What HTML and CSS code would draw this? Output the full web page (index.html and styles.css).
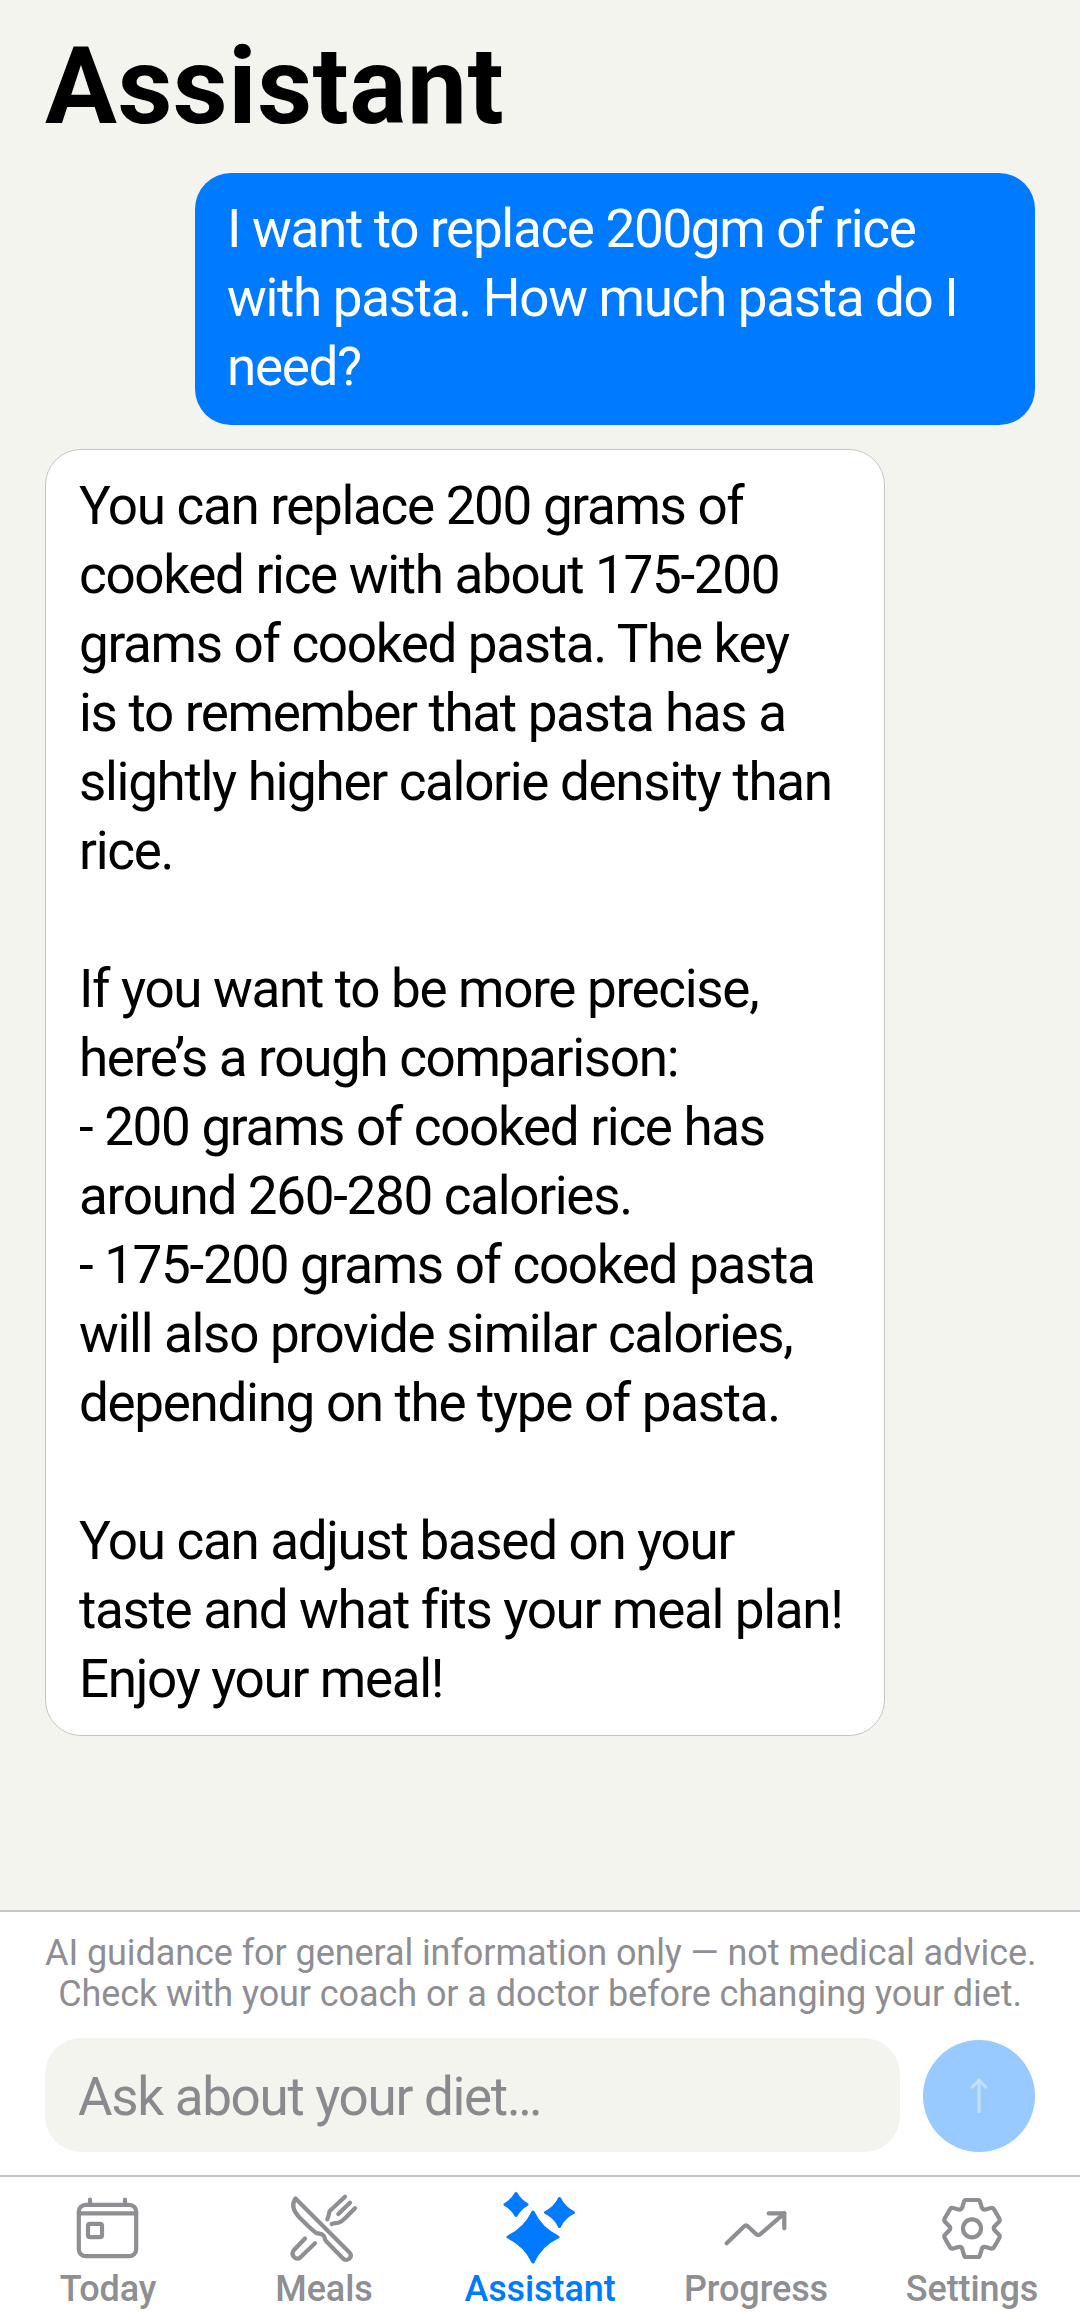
FILE: index.html
```html
<!DOCTYPE html>
<html lang="en">
<head>
    <meta charset="UTF-8">
    <meta name="viewport" content="width=device-width, initial-scale=1.0">
    <title>Assistant</title>
    <link rel="stylesheet" href="styles.css">
</head>
<body>
    <div class="app">
        <main class="chat">
            <h1>Assistant</h1>
            <div class="bubble user">I want to replace 200gm of rice with pasta. How much pasta do I need?</div>
            <div class="bubble reply">You can replace 200 grams of cooked rice with about 175-200 grams of cooked pasta. The key
is to remember that pasta has a slightly higher calorie density than rice.

If you want to be more precise, here’s a rough comparison:
- 200 grams of cooked rice has around 260-280 calories.
- 175-200 grams of cooked pasta will also provide similar calories, depending on the type of pasta.

You can adjust based on your taste and what fits your meal plan! Enjoy your meal!</div>
        </main>

        <section class="composer">
            <p class="disclaimer">AI guidance for general information only — not medical advice.<br>Check with your coach or a doctor before changing your diet.</p>
            <div class="ask-row">
                <div class="ask-input">Ask about your diet…</div>
                <button class="send" type="button" aria-label="Send">
                    <svg class="send-icon" viewBox="0 0 20 36" fill="none" stroke="currentColor" stroke-width="3">
                        <path d="M10 35V2M2.500 10 10 2l7.500 8"/>
                    </svg>
                </button>
            </div>
        </section>

        <!-- Tab bar -->
        <nav class="tabs">
            <div class="tab">
                <svg class="tab-icon" viewBox="0 0 72 72" fill="none" stroke="currentColor" stroke-width="4.2" stroke-linecap="round" stroke-linejoin="round">
                    <rect x="6.800" y="12.800" width="57.400" height="51.400" rx="7"/>
                    <path d="M6.800 21.300h57.400M18 7.700v5M53 7.700v5"/>
                    <rect x="16" y="31.800" width="14" height="13.400" rx="2"/>
                </svg>
                <span>Today</span>
            </div>
            <div class="tab">
                <svg class="tab-icon" viewBox="0 0 72 72" fill="none" stroke="currentColor" stroke-width="4.2" stroke-linecap="round" stroke-linejoin="round">
                    <path d="M7.500 6.500 61.500 60.500c2 2.500 1.500 4.500 0 6-1.800 1.500-4.500 2-6.500 0L38 49c-1.500-1.500-1-3.500-2.500-5.500s-4.500-1.500-7-2.500C25 39.500 18 32 11 25 5 18.500 3.500 12 7.500 6.500Z"/>
                    <path d="M57 4.700 42 18.700c-1.500 2.500-1 5.500-2.700 8.600M62 10.700 50.300 22M67 16.300 57 26.300c-2 2.500-4.500 3.700-6.700 4.400-2.500.6-4.500.5-6.600 1.300"/>
                    <path d="M17 46.500 6 58c-2 2.500-2 5 0 7s4.500 2 6.500.3L27 51.300"/>
                </svg>
                <span>Meals</span>
            </div>
            <div class="tab active">
                <svg class="tab-icon" viewBox="0 0 72 72" fill="currentColor" stroke="currentColor" stroke-width="3" stroke-linejoin="round">
                    <path d="M29 20Q37 37 54 45 37 53 29 70 21 53 4 45 21 37 29 20Z"/>
                    <path d="M12 1.500Q16 8.500 23 12.500 16 16.500 12 23.500 8 16.500 1 12.500 8 8.500 12 1.500Z"/>
                    <path d="M55.500 6.500Q60 16 69.500 20.500 60 25 55.500 34.500 51 25 41.500 20.500 51 16 55.500 6.500Z"/>
                </svg>
                <span>Assistant</span>
            </div>
            <div class="tab">
                <svg class="tab-icon" viewBox="0 0 72 72" fill="none" stroke="currentColor" stroke-width="4.2" stroke-linecap="round" stroke-linejoin="round">
                    <path d="M6.700 51.300 24 34.500c1.200-1.200 2.800-1.200 4 0l8 7.500c1.200 1.200 3.200 1.300 4.500 0L64.300 21.300"/>
                    <path d="M48.700 21.300h15.600v15"/>
                </svg>
                <span>Progress</span>
            </div>
            <div class="tab">
                <svg class="tab-icon" viewBox="0 0 72 72" fill="none" stroke="currentColor" stroke-width="4.2" stroke-linecap="round" stroke-linejoin="round">
                    <path d="M30 8H42Q43.600 8 44 9.500L45.600 15Q46.400 18 49.500 17.500L55 16Q57 15.500 58 17.300L63.300 26.500Q64.300 28.500 62.800 30L58.800 34Q56.800 36.300 58.800 38.600L62.800 42.600Q64.300 44 63.300 46L58 55.200Q57 57 55 56.500L49.500 55Q46.400 54.500 45.600 57.500L44 63Q43.600 65 42 65H30Q28.400 65 28 63L26.400 57.500Q25.600 54.500 22.500 55L17 56.500Q15 57 14 55.200L8.700 46Q7.700 44 9.200 42.600L13.200 38.600Q15.200 36.300 13.200 34L9.200 30Q7.700 28.500 8.700 26.500L14 17.300Q15 15.500 17 16L22.500 17.500Q25.600 18 26.400 15L28 9.500Q28.400 8 30 8Z"/>
                    <circle cx="36" cy="36.400" r="9"/>
                </svg>
                <span>Settings</span>
            </div>
        </nav>
    </div>
</body>
</html>
```

FILE: styles.css
```css
* {
    box-sizing: border-box;
}

body {
    margin: 0;
    font-family: Roboto, sans-serif;
    background: #f4f4ef;
    color: #000;
}

.app {
    display: flex;
    flex-direction: column;
    height: 100vh;
}

.chat {
    flex: 1;
    display: flex;
    flex-direction: column;
    padding: 27px 45px 0;
}

h1 {
    margin: 0 0 27px;
    font-size: 107px;
    letter-spacing: 0.5px;
    line-height: 119px;
    font-weight: 700;
}

.bubble {
    width: 840px;
    padding: 22px 33px 23px 32px;
    border-radius: 36px;
    font-size: 53px;
    letter-spacing: -1.32px;
    line-height: 69px;
    white-space: pre-line;
}

.user {
    align-self: flex-end;
    background: #007aff;
    color: #fff;
    margin-bottom: 24px;
}

.reply {
    padding-top: 22px;
    padding-bottom: 21px;
    padding-left: 33px;
    background: #fff;
    border: 1.5px solid #c6c6c8;
}

.composer {
    background: #fff;
    border-top: 2px solid #c6c6c8;
    padding: 21px 45px 23px;
}

.disclaimer {
    margin: 0 0 23px;
    font-size: 36px;
    letter-spacing: -0.08px;
    line-height: 41px;
    text-align: center;
    white-space: nowrap;
    color: #8e8e93;
}

.ask-row {
    display: flex;
    align-items: flex-end;
    gap: 23px;
}

.ask-input {
    flex: 1;
    height: 114px;
    padding: 0 33px;
    border-radius: 36px;
    background: #f4f4ef;
    color: #8a8a8e;
    font-size: 53px;
    letter-spacing: -1.32px;
    line-height: 118px;
}

.send {
    flex: none;
    display: flex;
    align-items: center;
    justify-content: center;
    width: 112px;
    height: 112px;
    padding: 0;
    border: none;
    border-radius: 50%;
    background: #99caff;
    color: #c5dfff;
}

.send-icon {
    width: 20px;
    height: 36px;
}

.tabs {
    display: flex;
    background: #fff;
    border-top: 2px solid #c6c6c8;
    height: 138px;
}

.tab {
    flex: 1;
    display: flex;
    flex-direction: column;
    align-items: center;
    gap: 4px;
    padding-top: 15px;
    color: #8e8e93;
    font-size: 36px;
    font-weight: 500;
    letter-spacing: -0.1px;
    line-height: 42px;
}

.tab.active {
    color: #007aff;
}

.tab-icon {
    width: 72px;
    height: 72px;
    overflow: visible;
}
```
